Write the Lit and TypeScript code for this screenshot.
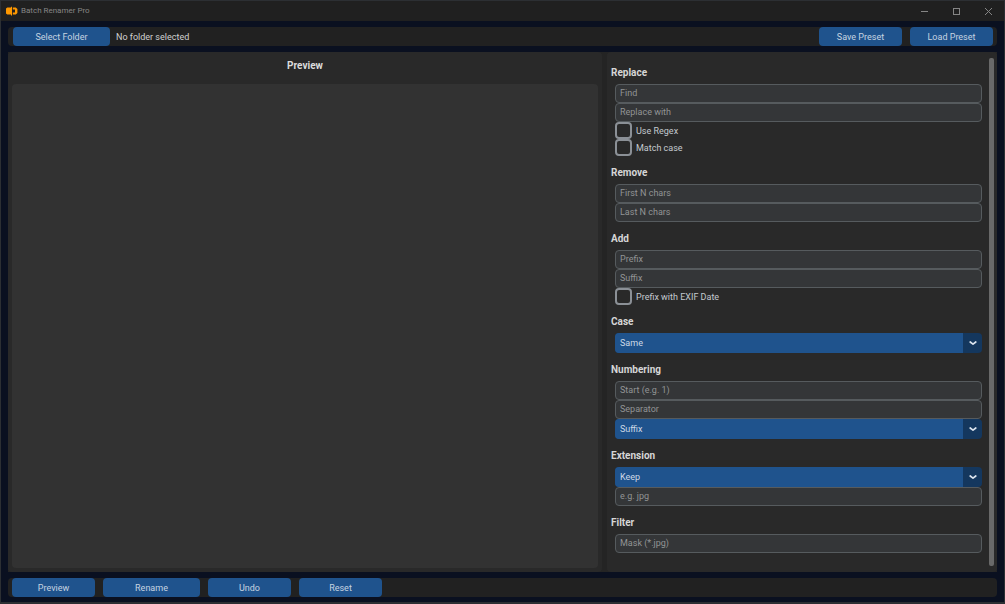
import { LitElement, html, css, svg } from "lit";
import { customElement, property, state } from "lit/decorators.js";

type Field =
  | { kind: "text"; label: string }
  | { kind: "check"; label: string }
  | { kind: "select"; label: string; options: string[] };

interface Group {
  title: string;
  fields: Field[];
}

const GROUPS: Group[] = [
  {
    title: "Replace",
    fields: [
      { kind: "text", label: "Find" },
      { kind: "text", label: "Replace with" },
      { kind: "check", label: "Use Regex" },
      { kind: "check", label: "Match case" },
    ],
  },
  {
    title: "Remove",
    fields: [
      { kind: "text", label: "First N chars" },
      { kind: "text", label: "Last N chars" },
    ],
  },
  {
    title: "Add",
    fields: [
      { kind: "text", label: "Prefix" },
      { kind: "text", label: "Suffix" },
      { kind: "check", label: "Prefix with EXIF Date" },
    ],
  },
  {
    title: "Case",
    fields: [{ kind: "select", label: "Case", options: ["Same"] }],
  },
  {
    title: "Numbering",
    fields: [
      { kind: "text", label: "Start (e.g. 1)" },
      { kind: "text", label: "Separator" },
      { kind: "select", label: "Number position", options: ["Suffix"] },
    ],
  },
  {
    title: "Extension",
    fields: [
      { kind: "select", label: "Extension", options: ["Keep"] },
      { kind: "text", label: "e.g. jpg" },
    ],
  },
  {
    title: "Filter",
    fields: [{ kind: "text", label: "Mask (*.jpg)" }],
  },
];

@customElement("option-group")
class OptionGroup extends LitElement {
  @property({ attribute: false }) group!: Group;

  static styles = css`
    :host {
      display: block;
    }
    .title {
      margin: 0 0 3px;
      padding-top: 7px;
      font-size: 10px;
      line-height: 16px;
      font-weight: 700;
      color: #d6d6d6;
    }
    .fields {
      display: flex;
      flex-direction: column;
      padding-left: 4px;
    }
    .text {
      box-sizing: border-box;
      width: 100%;
      height: 19px;
      margin: 0;
      padding: 0 4px 1px;
      border: 1px solid #565b5e;
      border-radius: 4px;
      background: #343638;
      color: #dce4ee;
      font: inherit;
      outline: none;
    }
    .text::placeholder {
      color: #929495;
      opacity: 1;
    }
    .check {
      display: flex;
      align-items: center;
      gap: 4px;
      height: 17px;
      color: #c4c9cf;
    }
    .box {
      appearance: none;
      box-sizing: border-box;
      width: 17px;
      height: 17px;
      margin: 0;
      border: 2px solid #8b9096;
      border-radius: 4px;
      flex: none;
    }
    .box:checked {
      background: #1f538d;
    }
    .select {
      display: grid;
      grid-template-columns: 1fr 19px;
      height: 20px;
      border-radius: 4px;
      overflow: hidden;
      background: #14375e;
    }
    .native {
      appearance: none;
      grid-area: 1 / 1 / 2 / 3;
      width: 100%;
      height: 20px;
      margin: 0;
      padding: 0 24px 1px 5px;
      border: 0;
      background: linear-gradient(#1f538d, #1f538d) left / calc(100% - 19px) 100% no-repeat;
      color: #cdd9e6;
      font: inherit;
      outline: none;
    }
    .arrow {
      grid-area: 1 / 2 / 2 / 3;
      place-self: center;
      width: 8px;
      height: 6px;
      pointer-events: none;
    }
  `;

  private renderField(f: Field) {
    if (f.kind === "text") {
      return html`<input class="text" type="text" placeholder=${f.label} aria-label=${f.label} />`;
    }
    if (f.kind === "check") {
      return html`<label class="check"><input class="box" type="checkbox" />${f.label}</label>`;
    }
    return html`<div class="select">
      <select class="native" aria-label=${f.label}>
        ${f.options.map((o) => html`<option>${o}</option>`)}
      </select>
      <svg class="arrow" viewBox="0 0 8 6" aria-hidden="true">
        <path d="M1.2 2 L4 4.1 L6.8 2" fill="none" stroke="#dce4ee" stroke-width="1.7" stroke-linecap="round" stroke-linejoin="round" />
      </svg>
    </div>`;
  }

  render() {
    return html`<h2 class="title">${this.group.title}</h2>
      <div class="fields">${this.group.fields.map((f) => this.renderField(f))}</div>`;
  }
}

const CAPTION_ICONS = [
  { name: "Minimize", shape: svg`<path d="M2 5.500h7" />` },
  { name: "Maximize", shape: svg`<rect x="2.5" y="2.5" width="6" height="6" />` },
  { name: "Close", shape: svg`<path d="M2 2l7 7M9 2l-7 7" />` },
];

@customElement("app-root")
class AppRoot extends LitElement {
  @state() private folder = "No folder selected";

  static styles = css`
    :host {
      display: flex;
      flex-direction: column;
      box-sizing: border-box;
      min-height: 100vh;
      background: #0a1020;
      border: 1px solid #2c2f33;
      border-bottom-width: 2px;
      font-family: Roboto, "Liberation Sans", sans-serif;
      font-size: 9px;
      line-height: 12px;
      color: #c8c8c8;
    }
    .caption {
      display: flex;
      align-items: center;
      height: 20px;
      padding-left: 5px;
      background: #202020;
      color: #868686;
      font-size: 8px;
    }
    .logo {
      width: 12px;
      height: 10px;
      margin-right: 3px;
    }
    .name {
      flex: 1;
      margin: 0;
      font-size: inherit;
      font-weight: 400;
    }
    .winbtn {
      display: grid;
      place-items: center;
      width: 32px;
      height: 20px;
      padding: 0;
      border: 0;
      background: none;
    }
    .glyph {
      width: 10px;
      height: 10px;
      fill: none;
      stroke: #858585;
      stroke-width: 1;
    }
    .content {
      flex: 1;
      display: flex;
      flex-direction: column;
      gap: 6px;
      padding: 6px 7px 5px;
    }
    .bar {
      display: flex;
      align-items: center;
      gap: 8px;
      border-radius: 4px;
      background: #212121;
    }
    .top {
      padding: 0 4px 0 5px;
    }
    .bottom {
      padding: 0 4px;
    }
    .status {
      flex: 1;
      margin-left: -2px;
      color: #d0d0d0;
    }
    .btn {
      width: 83px;
      height: 19px;
      padding: 0;
      border: 0;
      border-radius: 4px;
      background: #1f538d;
      color: #c6d3e1;
      font: inherit;
    }
    .wide {
      width: 97px;
    }
    .main {
      flex: 1;
      display: grid;
      grid-template-columns: minmax(0, 594fr) minmax(0, 390fr);
      gap: 5px;
      background: #242424;
    }
    .preview {
      display: flex;
      flex-direction: column;
      padding: 4px;
      border-radius: 4px;
      background: #292929;
    }
    .heading {
      margin: 0;
      padding: 2px 0 10px;
      font-size: 10px;
      line-height: 16px;
      font-weight: 700;
      text-align: center;
      color: #dcdcdc;
    }
    .list {
      flex: 1;
      border-radius: 4px;
      background: #323232;
    }
    .options {
      display: flex;
      gap: 7px;
      padding: 6px 3px 6px 4px;
      border-radius: 4px;
      background: #292929;
    }
    .groups {
      flex: 1;
      display: flex;
      flex-direction: column;
      gap: 2px;
      min-width: 0;
    }
    .track {
      width: 5px;
      border-radius: 2px;
      background: #696969;
    }
  `;

  render() {
    return html`
      <header class="caption">
        <svg class="logo" viewBox="0 0 12 10" aria-hidden="true">
          <path d="M1.300 1.500H5V.8h1v8.600H5V8.500H1.300L0 7.400V2.600z" fill="#ff9800" />
          <path d="M6.800 1.500h3L11.400 3v4L9.800 8.500h-3V6.500h2.200V3.500H6.800z" fill="#ff9800" />
        </svg>
        <h1 class="name">Batch Renamer Pro</h1>
        ${CAPTION_ICONS.map(
          (i) => html`<button class="winbtn" aria-label=${i.name}>
            <svg class="glyph" viewBox="0 0 10 10">${i.shape}</svg>
          </button>`
        )}
      </header>
      <div class="content">
        <div class="bar top">
          <button class="btn wide">Select Folder</button>
          <span class="status">${this.folder}</span>
          <button class="btn">Save Preset</button>
          <button class="btn">Load Preset</button>
        </div>
        <main class="main">
          <section class="preview">
            <h2 class="heading">Preview</h2>
            <div class="list"></div>
          </section>
          <section class="options">
            <div class="groups">
              ${GROUPS.map((g) => html`<option-group .group=${g}></option-group>`)}
            </div>
            <div class="track"></div>
          </section>
        </main>
        <div class="bar bottom">
          <button class="btn">Preview</button>
          <button class="btn wide">Rename</button>
          <button class="btn">Undo</button>
          <button class="btn">Reset</button>
        </div>
      </div>
    `;
  }
}
